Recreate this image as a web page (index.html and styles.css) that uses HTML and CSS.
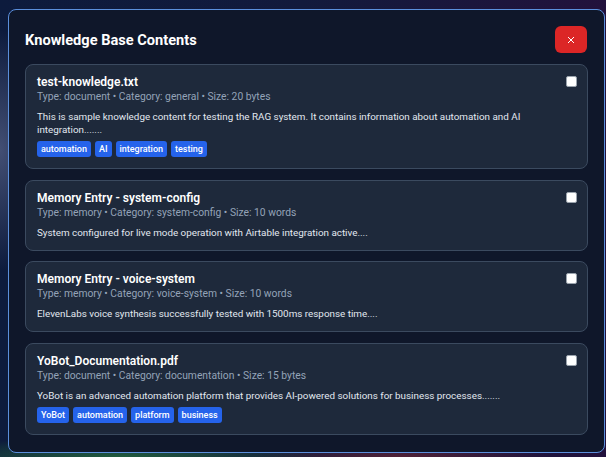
FILE: index.html
```html
<!DOCTYPE html>
<html lang="en">
<head>
<meta charset="utf-8">
<title>Knowledge Base Contents</title>
<link rel="stylesheet" href="styles.css">
</head>
<body>
<div class="backdrop">
  <div class="modal">
    <div class="modal-header">
      <h2 class="modal-title">Knowledge Base Contents</h2>
      <button class="close-btn" type="button" aria-label="Close">
        <svg width="8" height="8" viewBox="0 0 8 8"><path d="M1 1L7 7M7 1L1 7" stroke="#fff" stroke-width="1" fill="none"/></svg>
      </button>
    </div>
    <div class="list">
      <div class="card">
        <div class="card-body">
          <div class="card-title">test-knowledge.txt</div>
          <div class="card-meta">Type: document • Category: general • Size: 20 bytes</div>
          <div class="card-text">This is sample knowledge content for testing the RAG system. It contains information about automation and AI integration.......</div>
          <div class="tags">
            <span class="tag">automation</span><span class="tag">AI</span><span class="tag">integration</span><span class="tag">testing</span>
          </div>
        </div>
        <span class="check"></span>
      </div>
      <div class="card">
        <div class="card-body">
          <div class="card-title">Memory Entry - system-config</div>
          <div class="card-meta">Type: memory • Category: system-config • Size: 10 words</div>
          <div class="card-text">System configured for live mode operation with Airtable integration active....</div>
        </div>
        <span class="check"></span>
      </div>
      <div class="card">
        <div class="card-body">
          <div class="card-title">Memory Entry - voice-system</div>
          <div class="card-meta">Type: memory • Category: voice-system • Size: 10 words</div>
          <div class="card-text">ElevenLabs voice synthesis successfully tested with 1500ms response time....</div>
        </div>
        <span class="check"></span>
      </div>
      <div class="card">
        <div class="card-body">
          <div class="card-title">YoBot_Documentation.pdf</div>
          <div class="card-meta">Type: document • Category: documentation • Size: 15 bytes</div>
          <div class="card-text">YoBot is an advanced automation platform that provides AI-powered solutions for business processes.......</div>
          <div class="tags">
            <span class="tag">YoBot</span><span class="tag">automation</span><span class="tag">platform</span><span class="tag">business</span>
          </div>
        </div>
        <span class="check"></span>
      </div>
    </div>
  </div>
</div>
</body>
</html>
```

FILE: styles.css
```css
* { box-sizing: border-box; }
html, body { margin: 0; padding: 0; }
body {
  width: 606px;
  height: 457px;
  overflow: hidden;
  font-family: Roboto, "Noto Sans", sans-serif;
  background:
    radial-gradient(ellipse 60px 120px at 0px 150px, rgba(120,130,170,0.5), transparent),
    radial-gradient(ellipse 200px 20px at 120px 457px, rgba(40,120,60,0.7), transparent),
    radial-gradient(ellipse 150px 20px at 400px 457px, rgba(120,40,50,0.6), transparent),
    linear-gradient(90deg, #0d1b3d 0%, #121a3c 50%, #22113c 100%);
}
.backdrop {
  padding: 9px 1px 4px 8px;
}
.modal {
  width: 597px;
  height: 444px;
  background: #0f172a;
  border: 1px solid #5b8fdc;
  border-radius: 8px;
  padding: 16px;
  display: flex;
  flex-direction: column;
}
.modal-header {
  display: flex;
  align-items: center;
  justify-content: space-between;
  height: 27px;
  margin-bottom: 11px;
}
.modal-title {
  margin: 0;
  color: #ffffff;
  font-size: 14.6px;
  font-weight: 700;
  line-height: 20px;
}
.close-btn {
  width: 32px;
  height: 27px;
  margin-right: 1px;
  border: none;
  border-radius: 6px;
  background: #dc2626;
  display: flex;
  align-items: center;
  justify-content: center;
  padding: 0;
}
.list {
  display: flex;
  flex-direction: column;
  gap: 10.7px;
}
.card {
  display: flex;
  align-items: flex-start;
  justify-content: space-between;
  gap: 16px;
  background: #1e293b;
  border: 1px solid #3b4a5f;
  border-radius: 8px;
  padding: 10px 10px 11px 11px;
}
.card-title {
  color: #ffffff;
  font-size: 12px;
  font-weight: 600;
  line-height: 15px;
  margin-bottom: 0;
}
.card-meta {
  color: #94a3b8;
  font-size: 10.3px;
  line-height: 14px;
  margin-bottom: 6px;
}
.card-text {
  color: #e2e8f0;
  font-size: 9.85px;
  line-height: 13px;
}
.tags {
  display: flex;
  gap: 4px;
  margin-top: 5px;
}
.tag {
  background: #2563eb;
  color: #ffffff;
  font-size: 9px;
  font-weight: 500;
  line-height: 16px;
  height: 16px;
  padding: 0 4px;
  border-radius: 3px;
}
.check {
  flex: none;
  width: 11px;
  height: 11px;
  margin-top: 1px;
  background: #ffffff;
  border: 1px solid #9aa3ad;
  border-radius: 2px;
}
```
